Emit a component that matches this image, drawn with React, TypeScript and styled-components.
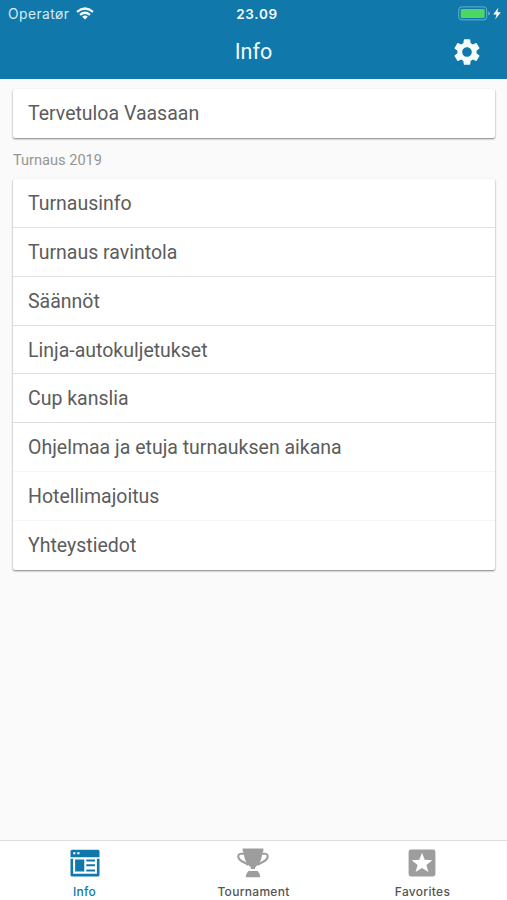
import React from "react";
import styled, { createGlobalStyle } from "styled-components";
import { MdSettings } from "react-icons/md";

const GlobalStyle = createGlobalStyle`
  *, *::before, *::after { box-sizing: border-box; }
  body { margin: 0; font-family: Roboto, "Liberation Sans", sans-serif; }
`;

const Screen = styled.div`
  display: flex;
  flex-direction: column;
  width: 507px;
  height: 900px;
  overflow: hidden;
  background: #fafafa;
`;

const Header = styled.header`
  flex: none;
  height: 79px;
  background: #1078aa;
  color: #f2fafd;
`;

const StatusBar = styled.div`
  display: grid;
  grid-template-columns: 1fr auto 1fr;
  align-items: center;
  height: 27px;
  padding: 0 5px 0 8px;
  font-family: Inter, "Liberation Sans", sans-serif;
`;

const Carrier = styled.div`
  display: flex;
  align-items: center;
  gap: 7px;
  font-size: 13.8px;
  letter-spacing: 0.45px;
  color: #d4edf6;
`;

const Clock = styled.time`
  margin-left: 4px;
  font-size: 13.5px;
  font-weight: 600;
  letter-spacing: 0.7px;
`;

const Power = styled.div`
  display: flex;
  align-items: center;
  justify-content: flex-end;
`;

const TitleBar = styled.div`
  display: grid;
  grid-template-columns: 1fr auto 1fr;
  align-items: center;
  height: 50px;
  padding: 0 24px;
`;

const Title = styled.h1`
  grid-column: 2;
  margin: 0;
  font-size: 21.5px;
  font-weight: 400;
  line-height: 26px;
`;

const SettingsButton = styled.button`
  display: flex;
  justify-self: end;
  padding: 0;
  border: 0;
  background: none;
  color: #f5fafc;
`;

const Content = styled.main`
  flex: 1;
  padding: 10px 12px 0 13px;
`;

const Card = styled.section`
  border-radius: 2px;
  background: #fff;
  box-shadow: 0 1px 2px rgba(0, 0, 0, 0.42), 0 1px 2px rgba(0, 0, 0, 0.1);
`;

const Row = styled.div<{ $line?: string }>`
  height: 48.9px;
  padding: 0 15px;
  border-bottom: 1px solid ${(p) => p.$line ?? "transparent"};
  color: #5c5c5c;
  font-size: 19.5px;
  line-height: 49px;
`;

const SectionLabel = styled.h2`
  margin: 0;
  height: 41px;
  color: #959595;
  font-size: 14.6px;
  font-weight: 400;
  line-height: 45px;
`;

const TabBar = styled.nav`
  flex: none;
  display: grid;
  grid-template-columns: repeat(3, 1fr);
  height: 60px;
  border-top: 1px solid #dedede;
  background: #fff;
`;

const Tab = styled.button<{ $active?: boolean }>`
  display: flex;
  flex-direction: column;
  align-items: center;
  gap: 6px;
  padding: 7px 0 0;
  border: 0;
  background: none;
  color: ${(p) => (p.$active ? "#1078aa" : "#9d9d9d")};
`;

const TabText = styled.span<{ $active?: boolean }>`
  color: ${(p) => (p.$active ? "#1078aa" : "#555")};
  font: 500 12px/15px Inter, "Liberation Sans", sans-serif;
  letter-spacing: 0.3px;
`;

const WifiIcon = () => (
  <svg width="18" height="13" viewBox="0 0 18 13">
    <g fill="none" stroke="#f4fbfd" strokeWidth="2.2">
      <path d="M1 4.9Q9-1.9 17 4.9" />
      <path d="M4 7.8Q9 3.7 14 7.8" />
    </g>
    <path d="M6.2 9.7Q9 7.5 11.8 9.7L9 12.4Z" fill="#f4fbfd" />
  </svg>
);

const BatteryIcon = () => (
  <svg width="44" height="15" viewBox="0 0 44 15">
    <rect x=".7" y=".9" width="28" height="13" rx="3" fill="none" stroke="#67b1cd" />
    <rect x="2.7" y="2.9" width="24" height="9" rx="1" fill="#4cd763" />
    <path d="M30.2 5.2Q32 6 32 7.4T30.2 9.6Z" fill="#67b1cd" />
    <path d="M40.4 1.6L35.2 8.6H38.6L37.2 13.6L42.8 6.3H39.4Z" fill="#fff" />
  </svg>
);

const InfoIcon = () => (
  <svg width="30" height="28" viewBox="0 0 30 28" fill="currentColor">
    <path
      fillRule="evenodd"
      d="M2 .8H28Q29.5.8 29.5 2.3V8.2H.5V2.3Q.5.8 2 .8ZM3.2 3.2V5.2H5.4V3.2ZM7.3 3.2V5.2H9.5V3.2Z"
    />
    <path
      fillRule="evenodd"
      d="M.5 9.8H29.5V26Q29.5 27.5 28 27.5H2Q.5 27.5.5 26ZM3.1 9.8V24.8H26.9V9.8Z"
    />
    <path d="M5.1 10.4H14.3V22.5H5.1ZM16.3 10.4H25V12.5H16.3ZM16.3 15.2H25V17.3H16.3ZM16.3 20.4H25V22.5H16.3Z" />
  </svg>
);

const TrophyIcon = () => (
  <svg width="33" height="30" viewBox="0 0 33 30">
    <g fill="none" stroke="currentColor" strokeWidth="2.1">
      <path d="M7 5.8H3.8C1 5.8.7 8.7 2.1 10.8C4.3 14 8 14 11.2 17" />
      <path d="M25 5.8H28.2C31 5.8 31.3 8.7 29.9 10.8C27.7 14 24 14 20.8 17" />
    </g>
    <path
      d="M5.6.5H26.4V3Q25.6 3.4 25.2 6C24.4 12 22.5 16.2 19 18.6Q17.9 19.4 17.9 21H14.1Q14.1 19.4 13 18.6C9.5 16.2 7.6 12 6.8 6Q6.4 3.4 5.6 3Z"
      fill="currentColor"
    />
    <path d="M11.4 23.1H20.6Q23.1 25.5 23.3 29.3H8.7Q8.9 25.5 11.4 23.1Z" fill="currentColor" />
  </svg>
);

const FavoriteIcon = () => (
  <svg width="29" height="28" viewBox="0 0 29 28">
    <rect x=".6" y=".6" width="26.8" height="26.8" rx="2.4" fill="currentColor" />
    <path
      d="M14 3.7L16.7 10.8L24.3 11.2L18.4 15.9L20.4 23.1L14 19L7.6 23.1L9.6 15.9L3.7 11.2L11.3 10.8Z"
      fill="#fff"
    />
  </svg>
);

const FAINT = "#f7f7f7";
const LINE = "#dfdfdf";

const pages = [
  { name: "Turnausinfo", line: LINE },
  { name: "Turnaus ravintola", line: LINE },
  { name: "Säännöt", line: LINE },
  { name: "Linja-autokuljetukset", line: LINE },
  { name: "Cup kanslia", line: LINE },
  { name: "Ohjelmaa ja etuja turnauksen aikana", line: FAINT },
  { name: "Hotellimajoitus", line: FAINT },
  { name: "Yhteystiedot", line: undefined },
];

const tabs = [
  { name: "Info", Icon: InfoIcon, active: true },
  { name: "Tournament", Icon: TrophyIcon, active: false },
  { name: "Favorites", Icon: FavoriteIcon, active: false },
];

const IconSlot = styled.span`
  display: flex;
  align-items: center;
  height: 30px;
`;

export default function App() {
  return (
    <>
      <GlobalStyle />
      <Screen>
        <Header>
          <StatusBar>
            <Carrier>
              Operatør
              <WifiIcon />
            </Carrier>
            <Clock>23.09</Clock>
            <Power>
              <BatteryIcon />
            </Power>
          </StatusBar>
          <TitleBar>
            <Title>Info</Title>
            <SettingsButton aria-label="Settings">
              <MdSettings size={32} />
            </SettingsButton>
          </TitleBar>
        </Header>
        <Content>
          <Card>
            <Row>Tervetuloa Vaasaan</Row>
          </Card>
          <SectionLabel>Turnaus 2019</SectionLabel>
          <Card>
            {pages.map((page) => (
              <Row key={page.name} $line={page.line}>
                {page.name}
              </Row>
            ))}
          </Card>
        </Content>
        <TabBar>
          {tabs.map(({ name, Icon, active }) => (
            <Tab key={name} $active={active}>
              <IconSlot>
                <Icon />
              </IconSlot>
              <TabText $active={active}>{name}</TabText>
            </Tab>
          ))}
        </TabBar>
      </Screen>
    </>
  );
}
